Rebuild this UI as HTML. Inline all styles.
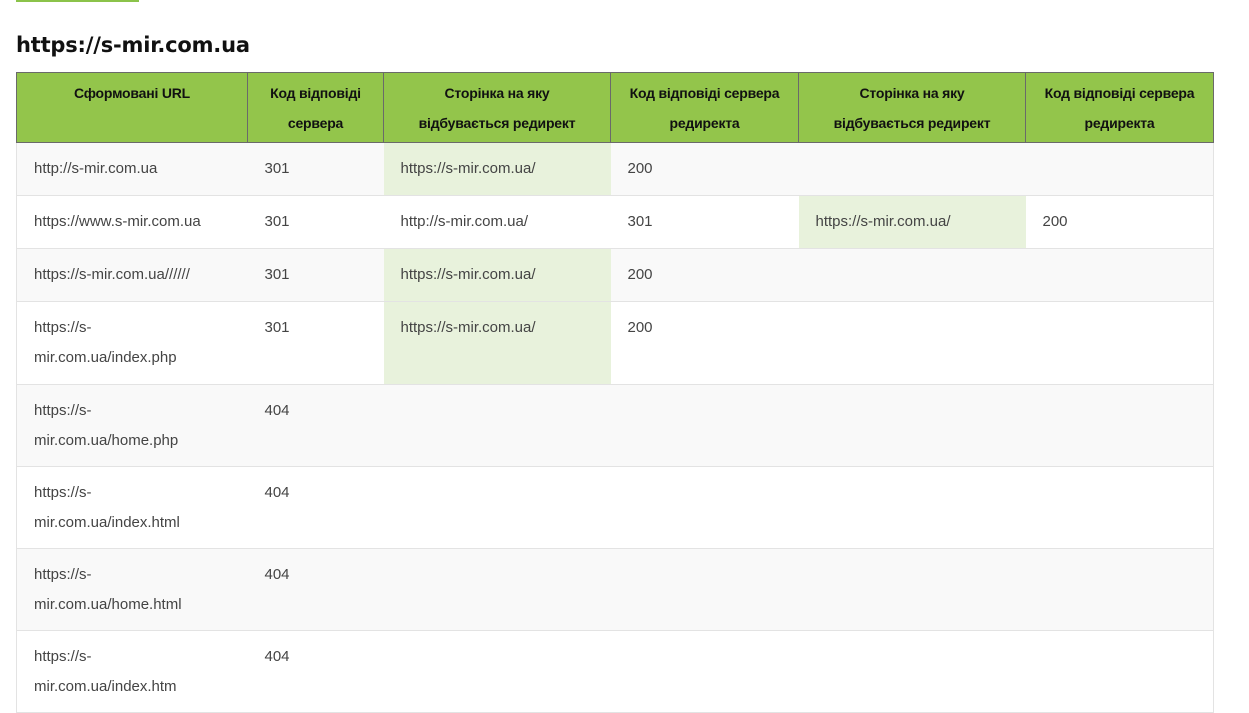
<!DOCTYPE html>
<html><head><meta charset="utf-8"><style>
body{margin:0;background:#fff;font-family:"Liberation Sans",Arial,sans-serif;width:1249px;height:703px;overflow:hidden;position:relative}
.bar{position:absolute;left:16px;top:0;width:123px;height:2px;background:#8bc34a}
h2{position:absolute;left:16px;top:33px;margin:0;font-size:21px;font-weight:bold;color:#111;font-family:"DejaVu Sans","Liberation Sans",sans-serif;letter-spacing:-0.2px}
table{position:absolute;left:16px;top:72px;border-collapse:collapse;table-layout:fixed;width:1197px}
th{background:#93c54b;border:1px solid #6a6a6a;font-size:14px;font-weight:bold;color:#111;line-height:30px;padding:5px 2px 4px;vertical-align:top;text-align:center;letter-spacing:-0.2px;white-space:nowrap}
td{font-size:15px;color:#444;line-height:30px;padding:11px 17px 11px 17px;vertical-align:top;border-bottom:1px solid #e3e3e3}
tr.t td{padding-bottom:10px}
td:first-child{border-left:1px solid #e3e3e3}
td:last-child{border-right:1px solid #e3e3e3}
tr.a td{background:#f9f9f9}
td.g{background:#e8f2dc !important}
</style></head><body>
<div class="bar"></div>
<h2>https://s-mir.com.ua</h2>
<table>
<colgroup><col style="width:231px"><col style="width:136px"><col style="width:227px"><col style="width:188px"><col style="width:227px"><col style="width:188px"></colgroup>
<tr><th>Сформовані URL<br>&nbsp;</th><th>Код відповіді<br>сервера</th><th>Сторінка на яку<br>відбувається редирект</th><th>Код відповіді сервера<br>редиректа</th><th>Сторінка на яку<br>відбувається редирект</th><th>Код відповіді сервера<br>редиректа</th></tr>
<tr class="a"><td>http://s-mir.com.ua</td><td>301</td><td class="g">https://s-mir.com.ua/</td><td>200</td><td></td><td></td></tr>
<tr><td>https://www.s-mir.com.ua</td><td>301</td><td>http://s-mir.com.ua/</td><td>301</td><td class="g">https://s-mir.com.ua/</td><td>200</td></tr>
<tr class="a"><td>https://s-mir.com.ua//////</td><td>301</td><td class="g">https://s-mir.com.ua/</td><td>200</td><td></td><td></td></tr>
<tr><td>https://s-<br>mir.com.ua/index.php</td><td>301</td><td class="g">https://s-mir.com.ua/</td><td>200</td><td></td><td></td></tr>
<tr class="a t"><td>https://s-<br>mir.com.ua/home.php</td><td>404</td><td></td><td></td><td></td><td></td></tr>
<tr class="t"><td>https://s-<br>mir.com.ua/index.html</td><td>404</td><td></td><td></td><td></td><td></td></tr>
<tr class="a t"><td>https://s-<br>mir.com.ua/home.html</td><td>404</td><td></td><td></td><td></td><td></td></tr>
<tr class="t"><td>https://s-<br>mir.com.ua/index.htm</td><td>404</td><td></td><td></td><td></td><td></td></tr>
</table>
</body></html>
